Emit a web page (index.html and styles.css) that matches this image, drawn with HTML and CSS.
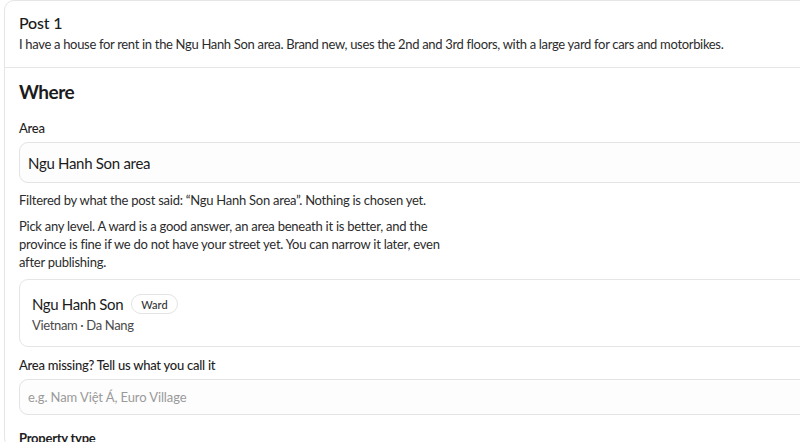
FILE: index.html
```html
<!DOCTYPE html>
<html lang="en">
<head>
<meta charset="utf-8">
<title>Post 1 – Where</title>
<link rel="stylesheet" href="styles.css">
</head>
<body>
<div class="page">
  <div class="card">
    <header class="post-head">
      <h2 class="post-title">Post 1</h2>
      <p class="post-text">I have a house for rent in the Ngu Hanh Son area. Brand new, uses the 2nd and 3rd floors, with a large yard for cars and motorbikes.</p>
    </header>
    <section class="where">
      <h3 class="section-title">Where</h3>
      <label class="field-label" for="area">Area</label>
      <input class="text-input large" id="area" type="text" value="Ngu Hanh Son area">
      <p class="hint">Filtered by what the post said: “Ngu Hanh Son area”. Nothing is chosen yet.</p>
      <p class="help">Pick any level. A ward is a good answer, an area beneath it is better, and the province is fine if we do not have your street yet. You can narrow it later, even after publishing.</p>
      <div class="option">
        <div class="option-top">
          <span class="option-name">Ngu Hanh Son</span>
          <span class="badge">Ward</span>
        </div>
        <div class="option-sub">Vietnam · Da Nang</div>
      </div>
      <label class="field-label missing" for="missing">Area missing? Tell us what you call it</label>
      <input class="text-input small" id="missing" type="text" placeholder="e.g. Nam Việt Á, Euro Village">
      <div class="field-label strong">Property type</div>
    </section>
  </div>
</div>
</body>
</html>
```

FILE: styles.css
```css
html, body {
  margin: 0;
  padding: 0;
  background: #ffffff;
  overflow: hidden;
}

body {
  font-family: Lato, "Noto Sans", sans-serif;
  color: #222222;
}

.page {
  padding-left: 4px;
}

.card {
  width: 900px;
  border: 1px solid #e5e5e5;
  border-radius: 10px;
  background: #ffffff;
}

.post-head {
  padding: 12px 14px 14px;
  border-bottom: 1px solid #e6e6e6;
}

.post-title {
  margin: 0;
  font-size: 16px;
  line-height: 20px;
  font-weight: 500;
  letter-spacing: -0.2px;
  color: #1b1b1b;
}

.post-text {
  margin: 2px 0 0;
  font-size: 13px;
  line-height: 18px;
  color: #2c2c2c;
  letter-spacing: -0.32px;
}

.where {
  padding: 12px 14px 0;
  display: flex;
  flex-direction: column;
  align-items: flex-start;
}

.section-title {
  margin: 0;
  font-size: 19px;
  line-height: 24px;
  font-weight: 700;
  letter-spacing: -0.5px;
  color: #1b1b1b;
}

.field-label {
  display: block;
  font-size: 13px;
  line-height: 18px;
  font-weight: 500;
  letter-spacing: -0.25px;
  color: #1f1f1f;
  margin-top: 15px;
}

.field-label.missing {
  margin-top: 9px;
}

.field-label.strong {
  font-weight: 700;
  margin-top: 14px;
}

.text-input {
  box-sizing: border-box;
  width: 100%;
  margin: 5px 0 0;
  border: 1px solid #e3e3e3;
  border-radius: 9px;
  background: #fdfdfd;
  font-family: inherit;
  color: #1b1b1b;
  outline: none;
  padding: 0 8px;
}

.text-input.large {
  height: 41px;
  font-size: 15px;
  letter-spacing: -0.3px;
}

.text-input.small {
  height: 36px;
  font-size: 13px;
  letter-spacing: -0.1px;
}

.text-input::placeholder {
  color: #9a9a9a;
}

.hint {
  margin: 8px 0 0;
  font-size: 13px;
  line-height: 18px;
  letter-spacing: -0.25px;
  color: #2c2c2c;
}

.help {
  margin: 8px 0 0;
  max-width: 425px;
  font-size: 13px;
  line-height: 18px;
  letter-spacing: -0.25px;
  color: #2c2c2c;
}

.option {
  box-sizing: border-box;
  width: 100%;
  margin-top: 8px;
  border: 1px solid #e5e5e5;
  border-radius: 9px;
  padding: 14px 12px 12px;
}

.option-top {
  display: flex;
  align-items: center;
  gap: 8px;
  height: 20px;
}

.option-name {
  font-size: 15px;
  letter-spacing: -0.35px;
  color: #1b1b1b;
}

.badge {
  display: inline-flex;
  align-items: center;
  height: 18px;
  padding: 0 9px;
  border: 1px solid #e3e3e3;
  border-radius: 10px;
  font-size: 11px;
  font-weight: 500;
  color: #333333;
}

.option-sub {
  margin-top: 2px;
  font-size: 13px;
  line-height: 18px;
  letter-spacing: -0.35px;
  color: #4a4a4a;
}
```
